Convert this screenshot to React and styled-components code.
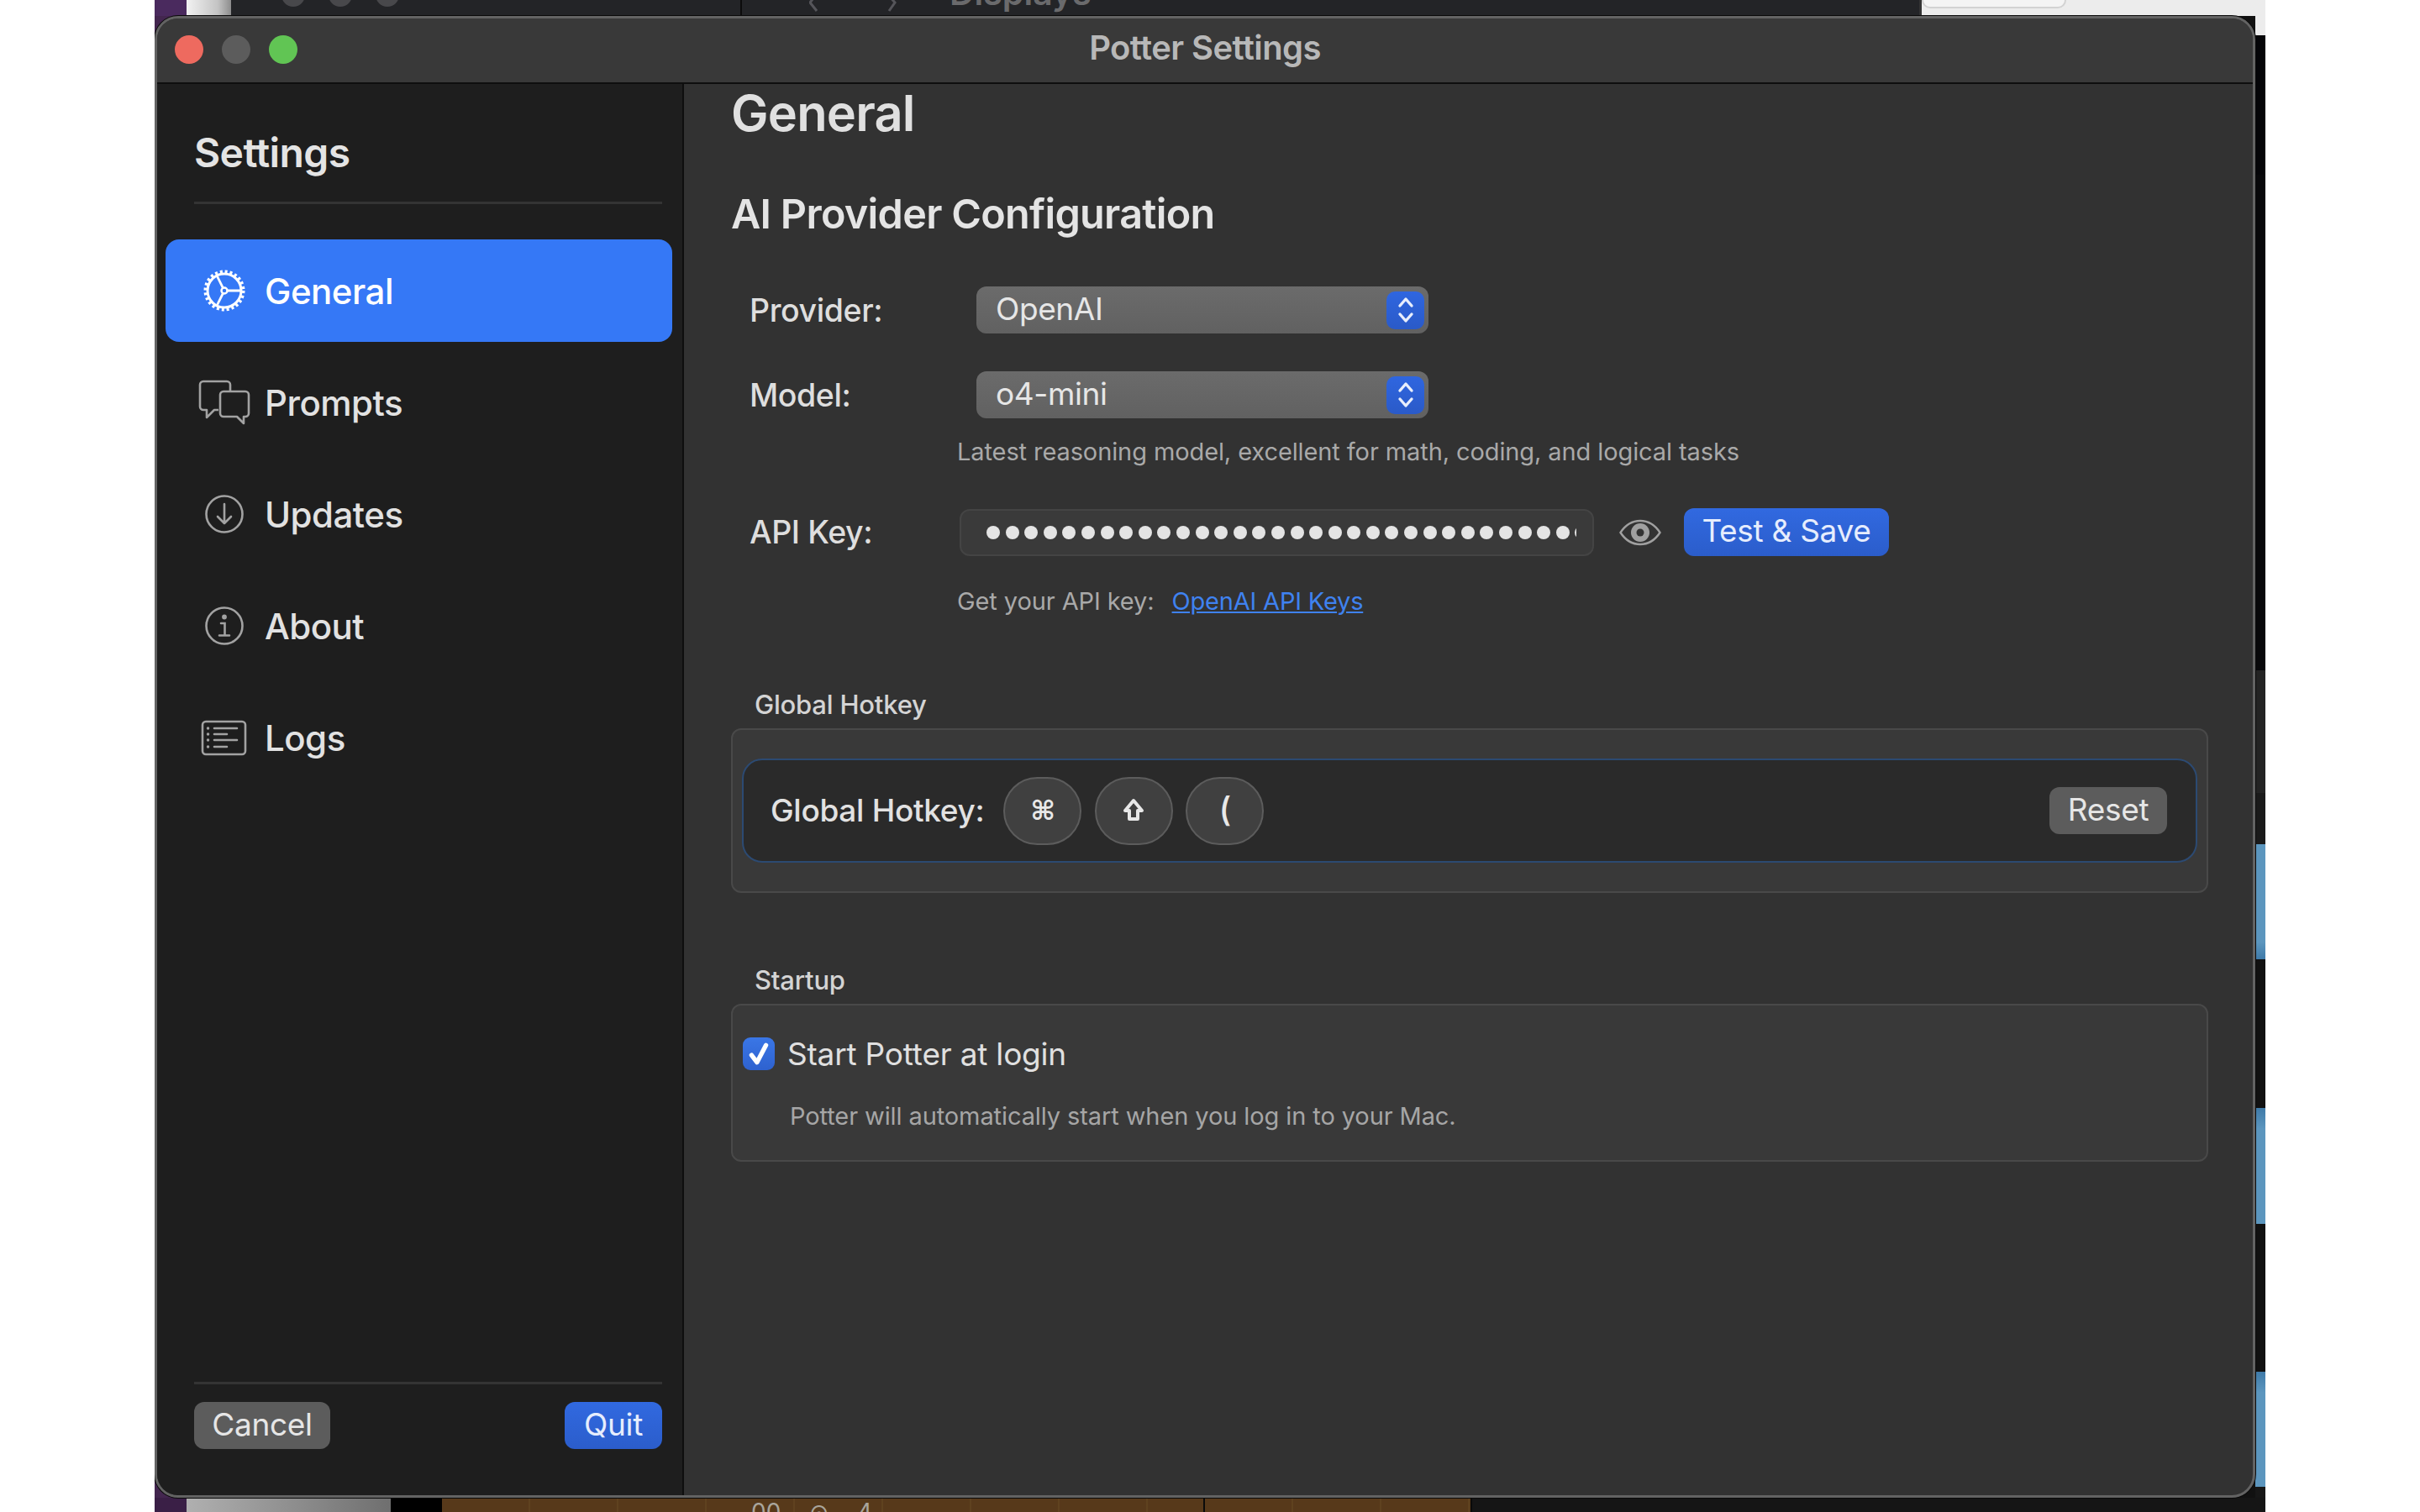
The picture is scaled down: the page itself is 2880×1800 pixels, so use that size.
import styled, { createGlobalStyle } from "styled-components";

const GlobalStyle = createGlobalStyle`
  html, body {
    margin: 0;
    padding: 0;
    background: #fff;
    font-family: Inter, "Liberation Sans", sans-serif;
  }
  * { box-sizing: border-box; }
`;

/* desktop that peeks out behind the window */
const Desktop = styled.div`
  position: relative;
  width: 2512px;
  height: 1800px;
  margin-left: 184px;
  overflow: hidden;
  background: linear-gradient(to right, #43264f 38px, #111 38px);
`;

const TopStrip = styled.div`
  position: absolute;
  top: 0;
  left: 0;
  right: 0;
  height: 19px;
  display: flex;
  overflow: hidden;
`;

const TopPurple = styled.div`
  width: 38px;
  background: #4a2a5e;
`;

const TopLight = styled.div`
  width: 53px;
  background: linear-gradient(to right, #f2f2f2, #c4c4c4 70%, #8d8d8d);
`;

const TopToolbar = styled.div`
  display: flex;
  gap: 28px;
  width: 606px;
  padding-left: 60px;
  background: #232427;
`;

const GhostDot = styled.span`
  width: 28px;
  height: 28px;
  margin-top: -20px;
  border-radius: 50%;
  background: #48484b;
`;

const TopTitleArea = styled.div`
  display: flex;
  flex: 1;
  align-items: flex-start;
  padding-left: 80px;
  background: #232427;
  border-left: 2px solid #0c0c0c;
  color: #6a6a6c;

  svg {
    flex-shrink: 0;
    width: 20px;
    height: 19px;
    margin-right: 64px;
    fill: none;
    stroke: #55555a;
    stroke-width: 3;
  }
`;

const GhostTitle = styled.span`
  margin: -28px 0 0 -1px;
  font-size: 41px;
  font-weight: 600;
  line-height: 38px;
`;

const TopWhite = styled.div`
  width: 412px;
  background: #ececec;
  border-left: 3px solid #333;
`;

const TopPill = styled.div`
  width: 172px;
  height: 10px;
  border: 2px solid #d2d2d2;
  border-top: 0;
  border-radius: 0 0 16px 16px;
  background: #f4f4f4;
`;

const RightStrip = styled.div`
  position: absolute;
  top: 19px;
  bottom: 0;
  right: 0;
  width: 12px;
  display: flex;
  flex-direction: column;
`;

const RightBand = styled.div`
  height: ${(props) => props.$h}px;
  background: ${(props) => props.$c};
`;

const BottomStrip = styled.div`
  position: absolute;
  left: 0;
  right: 0;
  bottom: 0;
  height: 17px;
  display: flex;
`;

const BottomPurple = styled.div`
  width: 38px;
  background: #3a1f46;
`;

const BottomGray = styled.div`
  width: 243px;
  background: linear-gradient(to right, #b0b0b0, #6f6f6f);
`;

const BottomBlack = styled.div`
  width: 61px;
  background: #000;
`;

const BottomBrown = styled.div`
  width: ${(props) => props.$w}px;
  flex-shrink: 0;
  overflow: hidden;
  background: repeating-linear-gradient(to right, #57391a 0, #57391a 103px, #5f421f 103px, #5f421f 105px);
  border-right: 2px solid #0a0a0a;
`;

const BottomLabel = styled.span`
  display: block;
  margin: 2px 0 0 368px;
  color: #a9a59c;
  font-size: 28px;
  line-height: 30px;
  word-spacing: 26px;
`;

const BottomDark = styled.div`
  flex: 1;
  background: #151515;
`;

/* the settings window */
const Window = styled.div`
  position: absolute;
  top: 19px;
  left: 0;
  width: 2500px;
  height: 1764px;
  display: flex;
  flex-direction: column;
  overflow: hidden;
  background: #323232;
  border: 3px solid #636363;
  border-radius: 28px;
  box-shadow: 0 0 0 1px #0a0a0a;
`;

const TitleBar = styled.div`
  display: grid;
  grid-template-columns: 1fr auto 1fr;
  align-items: center;
  height: 78px;
  flex-shrink: 0;
  padding-bottom: 2px;
  background: #393939;
  border-bottom: 2px solid #0e0e0e;
`;

const Lights = styled.div`
  display: flex;
  gap: 22px;
  padding-left: 21px;
`;

const Light = styled.span`
  width: 34px;
  height: 34px;
  border-radius: 50%;
  background: ${(props) => props.$color};
`;

const WindowTitle = styled.div`
  padding-bottom: 6px;
  color: #b8b8b8;
  font-size: 40px;
  font-weight: 600;
  letter-spacing: -0.6px;
`;

const Columns = styled.div`
  display: flex;
  flex: 1;
  min-height: 0;
`;

const Sidebar = styled.aside`
  display: flex;
  flex-direction: column;
  width: 627px;
  padding-top: 57px;
  background: #1e1e1e;
  border-right: 2px solid #0e0e0e;
`;

const SidebarTitle = styled.h2`
  margin: 0 0 0 44px;
  color: #e4e4e4;
  font-size: 48px;
  font-weight: 600;
  line-height: 50px;
  letter-spacing: -0.6px;
`;

const SideRule = styled.div`
  width: 557px;
  height: 3px;
  background: #343434;
`;

const HeadRule = styled(SideRule)`
  margin: 33px 0 0 44px;
`;

const Nav = styled.nav`
  display: flex;
  flex-direction: column;
  gap: 11px;
  margin: 42px 0 0 10px;
`;

const NavItem = styled.div`
  display: flex;
  align-items: center;
  width: 603px;
  height: 122px;
  padding-left: 39px;
  border-radius: 16px;
  background: ${(props) => (props.$active ? "#3578f6" : "transparent")};
  color: ${(props) => (props.$active ? "#fff" : "#e2e2e2")};
  font-size: 42px;
  font-weight: 500;
  letter-spacing: -0.5px;

  svg {
    flex-shrink: 0;
    width: 62px;
    height: 62px;
    margin-right: 17px;
    fill: none;
    stroke: ${(props) => (props.$active ? "#fff" : "#a2a2a2")};
  }
`;

const SideFooter = styled.div`
  display: flex;
  flex-direction: column;
  gap: 21px;
  margin: auto 0 55px 44px;
  width: 557px;
`;

const FooterButtons = styled.div`
  display: flex;
  justify-content: space-between;
`;

const Button = styled.button`
  height: ${(props) => props.$h || 56}px;
  padding: 0 0 4px;
  width: ${(props) => props.$w}px;
  border: 0;
  border-radius: 12px;
  background: ${(props) =>
    props.$primary ? "linear-gradient(#3169e0, #2b5dcb)" : "#5c5c5c"};
  color: ${(props) => (props.$primary ? "#e6edfd" : "#e6e6e6")};
  font-family: inherit;
  font-size: 37px;
  font-weight: 400;
  letter-spacing: -0.3px;
`;

const Main = styled.main`
  flex: 1;
  min-width: 0;
  padding: 4px 53px 0 56px;
`;

const PageTitle = styled.h1`
  margin: 0;
  color: #e0e0e0;
  font-size: 59.5px;
  font-weight: 600;
  line-height: 60px;
  letter-spacing: -0.8px;
`;

const SectionTitle = styled.h2`
  margin: 66px 0 0;
  color: #e4e4e4;
  font-size: 48.5px;
  font-weight: 600;
  line-height: 50px;
  letter-spacing: -0.7px;
`;

const FormRow = styled.div`
  display: flex;
  align-items: center;
  margin-top: ${(props) => props.$top}px;
  padding-left: 22px;
`;

const Label = styled.label`
  width: ${(props) => props.$w}px;
  color: #dedede;
  font-size: 37.5px;
  font-weight: 500;
  letter-spacing: -0.4px;
`;

const Select = styled.div`
  display: flex;
  align-items: center;
  justify-content: space-between;
  width: 538px;
  height: 56px;
  padding: 0 5px 0 23px;
  border-radius: 12px;
  background: linear-gradient(#6b6b6b, #616161);
  color: #e6e6e6;
  font-size: 37px;
  letter-spacing: -0.4px;
`;

const SelectText = styled.span`
  padding-bottom: 3px;
`;

const Stepper = styled.span`
  display: flex;
  align-items: center;
  justify-content: center;
  width: 45px;
  height: 45px;
  border-radius: 10px;
  background: linear-gradient(#2f66e0, #2a5ac8);

  svg {
    width: 26px;
    height: 36px;
    fill: none;
    stroke: #e8eefc;
    stroke-width: 3.4;
    stroke-linecap: round;
    stroke-linejoin: round;
  }
`;

const Hint = styled.p`
  margin: ${(props) => props.$top}px 0 0 269px;
  color: #a9a9a9;
  font-size: 29px;
  line-height: 30px;
  letter-spacing: -0.1px;
`;

const KeyInput = styled.div`
  display: flex;
  align-items: center;
  width: 755px;
  height: 56px;
  padding: 0 19px 0 30px;
  border: 2px solid #444;
  border-radius: 12px;
  background: #3a3a3a;
`;

const DotTrack = styled.div`
  display: flex;
  flex: 1;
  gap: 6.6px;
  overflow: hidden;
`;

const KeyDot = styled.span`
  flex-shrink: 0;
  width: 16px;
  height: 16px;
  border-radius: 50%;
  background: #e4e4e4;
`;

const EyeIcon = styled.svg`
  width: 50px;
  height: 32px;
  margin: 0 27px 0 30px;
`;

const LinkText = styled.a`
  margin-left: 21px;
  color: #3f82f0;
  letter-spacing: -0.2px;
  text-decoration: underline;
`;

const GroupTitle = styled.div`
  margin-top: ${(props) => props.$top}px;
  padding-left: 28px;
  color: #d4d4d4;
  font-size: 31px;
  font-weight: 500;
  line-height: 30px;
  letter-spacing: -0.2px;
`;

const GroupBox = styled.section`
  margin-top: 13px;
  border: 2px solid #494949;
  border-radius: 12px;
  background: #393939;
`;

const HotkeyBox = styled(GroupBox)`
  height: 196px;
  padding: 34px 11px 0 11px;
`;

const StartupBox = styled(GroupBox)`
  height: 188px;
  padding: 38px 12px 0;
`;

const HotkeyField = styled.div`
  display: flex;
  align-items: center;
  height: 124px;
  padding: 0 34px 0 32px;
  border: 2px solid #2c4a72;
  border-radius: 24px;
  background: #2a2a2a;
`;

const HotkeyLabel = styled.span`
  margin-right: 23px;
  padding-bottom: 2px;
  color: #e2e2e2;
  font-size: 37px;
  font-weight: 500;
  letter-spacing: -0.3px;
`;

const Keys = styled.div`
  display: flex;
  flex: 1;
  gap: 15.5px;
`;

const KeyCap = styled.span`
  display: flex;
  align-items: center;
  justify-content: center;
  width: 93px;
  height: 81px;
  border: 2px solid #5c5c5c;
  border-radius: 42px;
  background: #404040;
  color: #e8e8e8;
  font-family: "DejaVu Sans", sans-serif;
  font-size: 32px;
  font-weight: 700;

  svg {
    width: 26px;
    height: 30px;
    fill: none;
    stroke: #e8e8e8;
    stroke-width: 4;
    stroke-linejoin: round;
  }
`;

const ParenCap = styled(KeyCap)`
  padding-bottom: 4px;
  font-family: Inter, sans-serif;
  font-size: 40px;
  font-weight: 500;
`;

const CheckRow = styled.div`
  display: flex;
  align-items: center;
  gap: 15px;
`;

const CheckBox = styled.span`
  display: flex;
  align-items: center;
  justify-content: center;
  width: 38px;
  height: 39px;
  border-radius: 9px;
  background: linear-gradient(#3a76e6, #2e62cf);

  svg {
    width: 30px;
    height: 30px;
    fill: none;
    stroke: #fff;
    stroke-width: 5;
    stroke-linecap: round;
    stroke-linejoin: round;
  }
`;

const CheckLabel = styled.span`
  color: #e0e0e0;
  font-size: 37px;
  line-height: 39px;
  letter-spacing: -0.2px;
`;

const CheckHint = styled.p`
  margin: 40px 0 0 56px;
  color: #a6a6a6;
  font-size: 29px;
  line-height: 30px;
  letter-spacing: -0.1px;
`;

const GearIcon = () => (
  <svg viewBox="0 0 62 62">
    <circle cx="31" cy="31" r="20" strokeWidth="3" />
    <circle cx="31" cy="31" r="22.5" strokeWidth="4" strokeDasharray="3 2.89" />
    <circle cx="31" cy="31" r="3.5" strokeWidth="2.5" />
    <path d="M34.5 31H51M29.4 27.9 22 13M29.4 34.1 22 49" strokeWidth="2.8" />
  </svg>
);

const BubblesIcon = () => (
  <svg viewBox="0 0 62 62" strokeWidth="2.6" strokeLinejoin="round">
    <path d="M38 18v-8a4 4 0 0 0-4-4H6a4 4 0 0 0-4 4v26a4 4 0 0 0 4 4h4v9l9-9h5" />
    <path d="M30 18h26a4 4 0 0 1 4 4v22a4 4 0 0 1-4 4h-2v8l-8-8H30a4 4 0 0 1-4-4V22a4 4 0 0 1 4-4z" />
  </svg>
);

const DownIcon = () => (
  <svg viewBox="0 0 62 62" strokeWidth="2.6" strokeLinecap="round" strokeLinejoin="round">
    <circle cx="31" cy="31" r="21.5" />
    <path d="M31 19v23M23 34l8 8 8-8" />
  </svg>
);

const InfoIcon = () => (
  <svg viewBox="0 0 62 62" strokeWidth="2.6" strokeLinecap="round">
    <circle cx="31" cy="31" r="21.5" />
    <path d="M27 28h4.5v14M25 42.5h12" />
    <circle cx="31" cy="20.5" r="1.6" fill="#a2a2a2" />
  </svg>
);

const LogsIcon = () => (
  <svg viewBox="0 0 62 62" strokeWidth="2.6" strokeLinecap="round">
    <rect x="5" y="12" width="51" height="39" rx="4" />
    <path d="M19 20h27M19 27h15M19 34h27M19 42h15" />
    <path d="M11.5 20h.1M11.5 27h.1M11.5 34h.1M11.5 42h.1" strokeWidth="3.4" />
  </svg>
);

const Chevrons = () => (
  <svg viewBox="0 0 26 36">
    <path d="M6 13l7-8 7 8M6 23l7 8 7-8" />
  </svg>
);

const NAV_ITEMS = [
  { label: "General", icon: <GearIcon />, active: true },
  { label: "Prompts", icon: <BubblesIcon /> },
  { label: "Updates", icon: <DownIcon /> },
  { label: "About", icon: <InfoIcon /> },
  { label: "Logs", icon: <LogsIcon /> },
];

const RIGHT_BANDS = [
  [23, "#ececec"],
  [166, "#050508"],
  [590, "#08080a"],
  [146, "#232323"],
  [61, "#1a1a1a"],
  [137, "linear-gradient(#5c96be, #5c96be 85%, #3f7aa8)"],
  [177, "#111"],
  [138, "linear-gradient(#3f7aa8, #5c96be 18%, #5c96be)"],
  [176, "#111"],
  [137, "linear-gradient(#3f7aa8, #5c96be 18%, #5c96be)"],
  [30, "#171717"],
];

export default function App() {
  return (
    <>
      <GlobalStyle />
      <Desktop>
        <TopStrip>
          <TopPurple />
          <TopLight />
          <TopToolbar>
            <GhostDot />
            <GhostDot />
            <GhostDot />
          </TopToolbar>
          <TopTitleArea>
            <svg viewBox="0 0 20 19">
              <path d="M8-6 1 3l8 10" />
            </svg>
            <svg viewBox="0 0 20 19">
              <path d="M10-6l8 9-7 10" />
            </svg>
            <GhostTitle>Displays</GhostTitle>
          </TopTitleArea>
          <TopWhite>
            <TopPill />
          </TopWhite>
        </TopStrip>
        <RightStrip>
          {RIGHT_BANDS.map(([h, c], i) => (
            <RightBand key={i} $h={h} $c={c} />
          ))}
        </RightStrip>
        <BottomStrip>
          <BottomPurple />
          <BottomGray />
          <BottomBlack />
          <BottomBrown $w={908}>
            <BottomLabel>00 ⊙ 4</BottomLabel>
          </BottomBrown>
          <BottomBrown $w={318} />
          <BottomDark />
        </BottomStrip>

        <Window>
          <TitleBar>
            <Lights>
              <Light $color="#ee6a5f" />
              <Light $color="#5c5c5c" />
              <Light $color="#61c554" />
            </Lights>
            <WindowTitle>Potter Settings</WindowTitle>
          </TitleBar>
          <Columns>
            <Sidebar>
              <SidebarTitle>Settings</SidebarTitle>
              <HeadRule />
              <Nav>
                {NAV_ITEMS.map((item) => (
                  <NavItem key={item.label} $active={item.active}>
                    {item.icon}
                    {item.label}
                  </NavItem>
                ))}
              </Nav>
              <SideFooter>
                <SideRule />
                <FooterButtons>
                  <Button $w={162}>Cancel</Button>
                  <Button $w={116} $primary>
                    Quit
                  </Button>
                </FooterButtons>
              </SideFooter>
            </Sidebar>
            <Main>
              <PageTitle>General</PageTitle>
              <SectionTitle>AI Provider Configuration</SectionTitle>

              <FormRow $top={61}>
                <Label $w={270}>Provider:</Label>
                <Select>
                  <SelectText>OpenAI</SelectText>
                  <Stepper>
                    <Chevrons />
                  </Stepper>
                </Select>
              </FormRow>
              <FormRow $top={45}>
                <Label $w={270}>Model:</Label>
                <Select>
                  <SelectText>o4-mini</SelectText>
                  <Stepper>
                    <Chevrons />
                  </Stepper>
                </Select>
              </FormRow>
              <Hint $top={25}>Latest reasoning model, excellent for math, coding, and logical tasks</Hint>

              <FormRow $top={52}>
                <Label $w={250}>API Key:</Label>
                <KeyInput>
                  <DotTrack>
                    {Array.from({ length: 32 }, (_, i) => (
                      <KeyDot key={i} />
                    ))}
                  </DotTrack>
                </KeyInput>
                <EyeIcon viewBox="0 0 50 32">
                  <path
                    d="M1.5 16C8 6 16 2 25 2s17 4 23.5 14C42 26 34 30 25 30S8 26 1.5 16z"
                    fill="none"
                    stroke="#a0a0a0"
                    strokeWidth="2.4"
                  />
                  <circle cx="25" cy="16" r="11" fill="#a0a0a0" />
                  <circle cx="25" cy="16" r="4.5" fill="#323232" />
                </EyeIcon>
                <Button $w={244} $h={57} $primary>
                  Test &amp; Save
                </Button>
              </FormRow>
              <Hint $top={39}>
                Get your API key:
                <LinkText>OpenAI API Keys</LinkText>
              </Hint>

              <GroupTitle $top={93}>Global Hotkey</GroupTitle>
              <HotkeyBox>
                <HotkeyField>
                  <HotkeyLabel>Global Hotkey:</HotkeyLabel>
                  <Keys>
                    <KeyCap>⌘</KeyCap>
                    <KeyCap>
                      <svg viewBox="0 0 26 30">
                        <path d="M13 3 23 15H18V25H8V15H3z" />
                      </svg>
                    </KeyCap>
                    <ParenCap>(</ParenCap>
                  </Keys>
                  <Button $w={140}>Reset</Button>
                </HotkeyField>
              </HotkeyBox>

              <GroupTitle $top={89}>Startup</GroupTitle>
              <StartupBox>
                <CheckRow>
                  <CheckBox>
                    <svg viewBox="0 0 28 28">
                      <path d="M6 15l6 8L22 4" />
                    </svg>
                  </CheckBox>
                  <CheckLabel>Start Potter at login</CheckLabel>
                </CheckRow>
                <CheckHint>Potter will automatically start when you log in to your Mac.</CheckHint>
              </StartupBox>
            </Main>
          </Columns>
        </Window>
      </Desktop>
    </>
  );
}
